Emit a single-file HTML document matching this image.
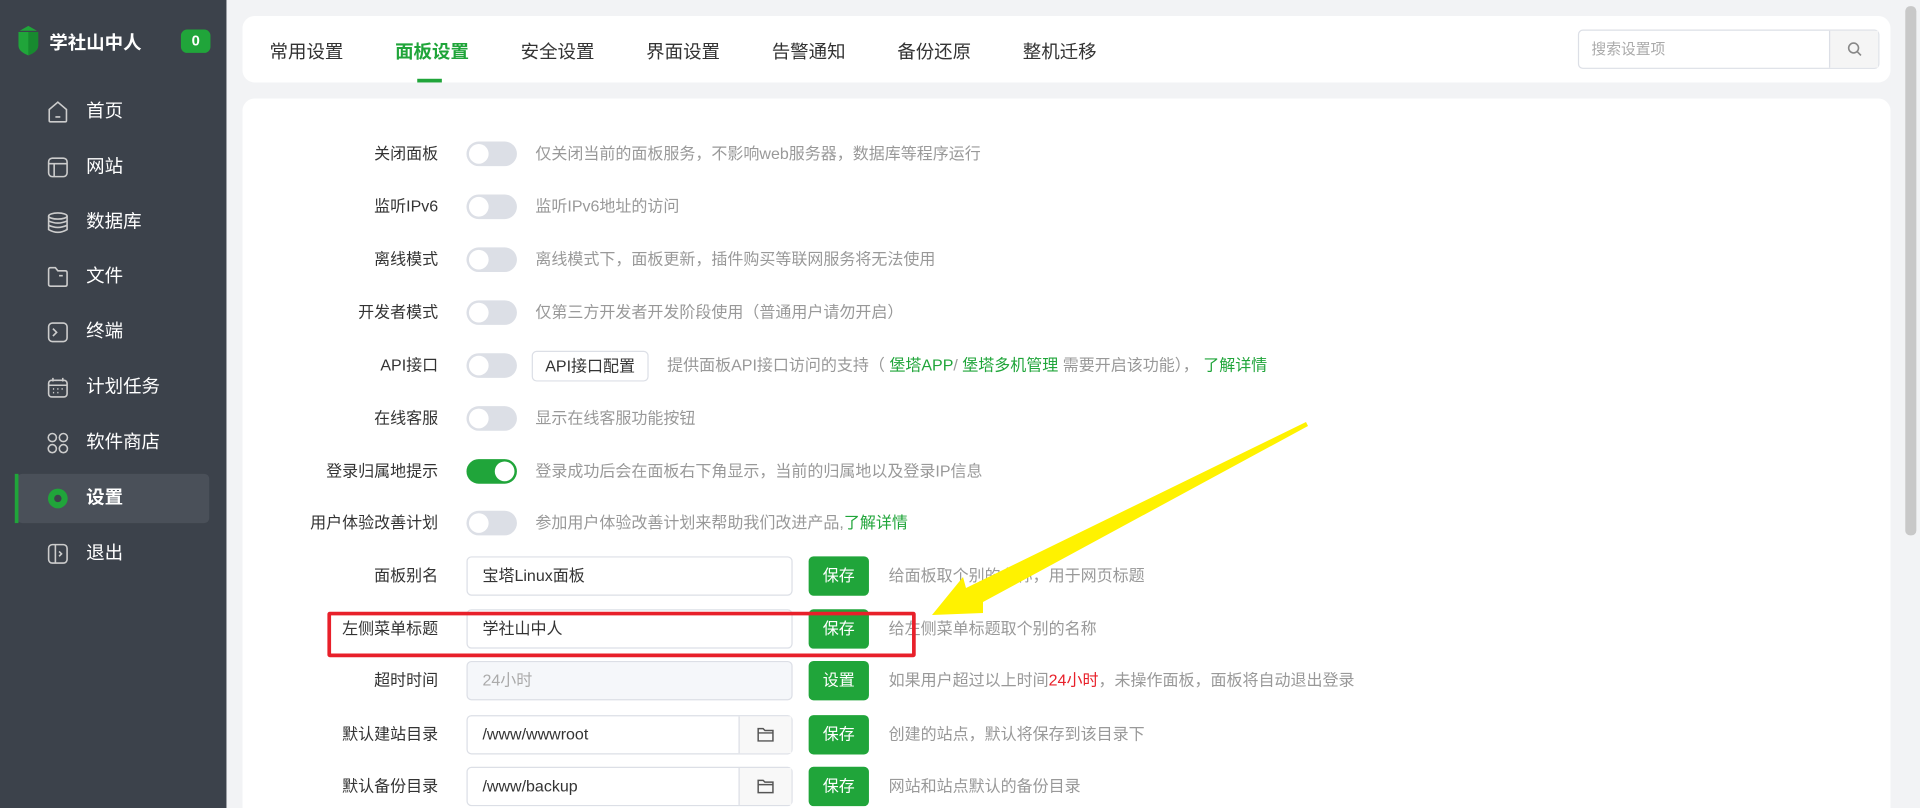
<!DOCTYPE html>
<html><head><meta charset="utf-8"><style>
*{box-sizing:border-box;margin:0;padding:0}
html,body{width:1920px;height:808px;overflow:hidden;background:#f2f3f5;font-family:"Liberation Sans","Noto Sans CJK SC",sans-serif}
#clip{position:absolute;left:0;top:0;width:1920px;height:808px;overflow:hidden}
#w{position:absolute;left:0;top:0;width:1560px;height:657px;overflow:hidden;transform:scale(1.2308,1.2308);transform-origin:0 0}
.sb{position:absolute;left:0;top:0;width:184px;height:660px;background:#3c424b}
.logo{position:absolute;left:40px;top:24px;color:#fff;font-weight:bold;font-size:15px}
.badge{position:absolute;left:147px;top:24px;width:24px;height:19px;border-radius:5px;background:#20a53a;color:#fff;font-weight:bold;font-size:12px;text-align:center;line-height:19px}
.mi{position:absolute;left:14px;width:156px;height:40px;color:#fff;font-size:15px;line-height:40px;padding-left:56px}
.mi svg{position:absolute;left:24px;top:11px}
.act{background:#4a5059;border-radius:4px}
.act:before{content:"";position:absolute;left:-2px;top:0;width:3px;height:40px;background:#20a53a}
.card{position:absolute;left:197px;background:#fff;border-radius:10px;width:1339px}
.tab{position:absolute;top:31px;font-size:15px;color:#333}
.row{position:absolute;left:197px;width:1339px;height:40px;font-size:13px}
.lb{position:absolute;right:1180px;top:0;line-height:40px;color:#333;white-space:nowrap}
.tg{position:absolute;left:182px;top:10px;width:41px;height:20px;border-radius:10px;background:#dcdfe6}
.tg:after{content:"";position:absolute;left:2px;top:2px;width:16px;height:16px;border-radius:50%;background:#fff}
.tg.on{background:#20a53a}.tg.on:after{left:23px}
.ds{position:absolute;left:238px;line-height:40px;color:#999;white-space:nowrap}
.ds2{position:absolute;left:525px;line-height:40px;color:#999;white-space:nowrap}
.g{color:#20a53a}
.in{position:absolute;left:182px;top:4px;width:265px;height:32px;border:1px solid #dcdfe6;border-radius:4px;line-height:30px;padding-left:12px;color:#333;background:#fff}
.bt{position:absolute;left:460px;top:4px;width:49px;height:32px;background:#20a53a;border-radius:4px;color:#fff;text-align:center;line-height:32px}
.fd{position:absolute;right:0;top:0;width:43px;height:30px;border-left:1px solid #dcdfe6;background:#f8f8f8}
</style></head><body><div id="clip"><div id="w">
<div class="sb">
<svg style="position:absolute;left:13px;top:20px" width="20" height="26" viewBox="0 0 20 26"><path d="M10 1 L3 5 L17 5Z M2 6 H18 V17 Q18 22 10 25 Q2 22 2 17Z" fill="#20a53a"/><path d="M10 6 V25 Q18 22 18 17 V6Z" fill="#178a2f"/></svg>
<div class="logo">学社山中人</div><div class="badge">0</div>
<div class="mi" style="top:71px"><svg width="18" height="18" fill="none" stroke="#ccc" stroke-width="1.3"><path d="M2 7 L9 1 L16 7 V16 Q16 17 15 17 H3 Q2 17 2 16Z M7 13 H11"/></svg>首页</div>
<div class="mi" style="top:116px"><svg width="18" height="18" fill="none" stroke="#ccc" stroke-width="1.3"><rect x="1.5" y="1.5" width="15" height="15" rx="3"/><path d="M1.5 6 H16.5 M6 6 V16.5"/></svg>网站</div>
<div class="mi" style="top:161px"><svg width="18" height="18" fill="none" stroke="#ccc" stroke-width="1.3"><ellipse cx="9" cy="3.5" rx="7.5" ry="2.5"/><path d="M1.5 3.5 V14.5 Q9 19 16.5 14.5 V3.5 M1.5 7.5 Q9 11 16.5 7.5 M1.5 11 Q9 14.5 16.5 11"/></svg>数据库</div>
<div class="mi" style="top:205px"><svg width="18" height="18" fill="none" stroke="#ccc" stroke-width="1.3"><path d="M1.5 3 Q1.5 1.5 3 1.5 H7 L9 4 H15 Q16.5 4 16.5 5.5 V15 Q16.5 16.5 15 16.5 H3 Q1.5 16.5 1.5 15Z M10 8 H13"/></svg>文件</div>
<div class="mi" style="top:250px"><svg width="18" height="18" fill="none" stroke="#ccc" stroke-width="1.3"><rect x="1.5" y="1.5" width="15" height="15" rx="3"/><path d="M5 6 L8 9 L5 12"/></svg>终端</div>
<div class="mi" style="top:295px"><svg width="18" height="18" fill="none" stroke="#ccc" stroke-width="1.3"><rect x="1.5" y="3" width="15" height="13.5" rx="2.5"/><path d="M1.5 7 H16.5 M5 1 V4 M13 1 V4 M5 10 H6 M8.5 10 H9.5 M12 10 H13 M5 13 H6 M8.5 13 H9.5"/></svg>计划任务</div>
<div class="mi" style="top:340px"><svg width="18" height="18" fill="none" stroke="#ccc" stroke-width="1.3"><circle cx="4.5" cy="4.5" r="3.3"/><circle cx="13.5" cy="4.5" r="3.3"/><circle cx="4.5" cy="13.5" r="3.3"/><circle cx="13.5" cy="13.5" r="3.3"/></svg>软件商店</div>
<div class="mi act" style="top:385px"><svg width="18" height="18"><circle cx="9" cy="9" r="8" fill="#20a53a"/><circle cx="9" cy="9" r="3" fill="#3c424b"/></svg><b>设置</b></div>
<div class="mi" style="top:430px"><svg width="18" height="18" fill="none" stroke="#ccc" stroke-width="1.3"><rect x="1.5" y="1.5" width="15" height="15" rx="3"/><path d="M7 1.5 V16.5 M10 7 L12 9 L10 11"/></svg>退出</div>
</div>
<div class="card" style="top:13px;height:54px">
<div class="tab" style="left:22px;top:18px">常用设置</div>
<div class="tab" style="left:124px;top:18px;color:#20a53a;font-weight:bold">面板设置</div>
<div style="position:absolute;left:142px;top:51px;width:20px;height:3px;background:#20a53a"></div>
<div class="tab" style="left:226px;top:18px">安全设置</div>
<div class="tab" style="left:328px;top:18px">界面设置</div>
<div class="tab" style="left:430px;top:18px">告警通知</div>
<div class="tab" style="left:532px;top:18px">备份还原</div>
<div class="tab" style="left:634px;top:18px">整机迁移</div>
<div style="position:absolute;left:1085px;top:11px;width:245px;height:32px;border:1px solid #dcdfe6;border-radius:4px;font-size:12px;color:#aaa;line-height:30px;padding-left:10px">搜索设置项
<div style="position:absolute;right:0;top:0;width:40px;height:30px;border-left:1px solid #dcdfe6;background:#f5f5f5"><svg style="position:absolute;left:14px;top:9px" width="12" height="12" fill="none" stroke="#888" stroke-width="1.3"><circle cx="5" cy="5" r="4"/><path d="M8 8 L11 11"/></svg></div></div>
</div>
<div class="card" style="top:80px;height:590px"></div>
<div style="position:absolute;left:1548px;top:5px;width:9px;height:430px;background:#c8c8c8;border-radius:4px"></div>

<div class="row" style="top:105px"><div class="lb">关闭面板</div><div class="tg"></div><div class="ds">仅关闭当前的面板服务，不影响web服务器，数据库等程序运行</div></div>
<div class="row" style="top:148px"><div class="lb">监听IPv6</div><div class="tg"></div><div class="ds">监听IPv6地址的访问</div></div>
<div class="row" style="top:191px"><div class="lb">离线模式</div><div class="tg"></div><div class="ds">离线模式下，面板更新，插件购买等联网服务将无法使用</div></div>
<div class="row" style="top:234px"><div class="lb">开发者模式</div><div class="tg"></div><div class="ds">仅第三方开发者开发阶段使用（普通用户请勿开启）</div></div>
<div class="row" style="top:277px"><div class="lb">API接口</div><div class="tg"></div><div style="position:absolute;left:235px;top:8px;width:95px;height:25px;border:1px solid #dcdfe6;border-radius:4px;text-align:center;line-height:23px;color:#333">API接口配置</div><div class="ds" style="left:345px">提供面板API接口访问的支持（ <span class="g">堡塔APP</span>/ <span class="g">堡塔多机管理</span> 需要开启该功能）， <span class="g">了解详情</span></div></div>
<div class="row" style="top:320px"><div class="lb">在线客服</div><div class="tg"></div><div class="ds">显示在线客服功能按钮</div></div>
<div class="row" style="top:363px"><div class="lb">登录归属地提示</div><div class="tg on"></div><div class="ds">登录成功后会在面板右下角显示，当前的归属地以及登录IP信息</div></div>
<div class="row" style="top:405px"><div class="lb">用户体验改善计划</div><div class="tg"></div><div class="ds">参加用户体验改善计划来帮助我们改进产品,<span class="g">了解详情</span></div></div>
<div class="row" style="top:448px"><div class="lb">面板别名</div><div class="in">宝塔Linux面板</div><div class="bt">保存</div><div class="ds2">给面板取个别的名称，用于网页标题</div></div>
<div class="row" style="top:491px"><div class="lb">左侧菜单标题</div><div class="in">学社山中人</div><div class="bt">保存</div><div class="ds2">给左侧菜单标题取个别的名称</div></div>
<div class="row" style="top:533px"><div class="lb">超时时间</div><div class="in" style="background:#f5f7fa;color:#aaa">24小时</div><div class="bt">设置</div><div class="ds2">如果用户超过以上时间<span style="color:#e8202a">24小时</span>，未操作面板，面板将自动退出登录</div></div>
<div class="row" style="top:577px"><div class="lb">默认建站目录</div><div class="in">/www/wwwroot<div class="fd"><svg style="position:absolute;left:14px;top:8px" width="15" height="13" fill="none" stroke="#555" stroke-width="1.2"><path d="M1 2 H5 L6.5 3.5 H13 V12 H1Z M1 5.5 H13"/></svg></div></div><div class="bt">保存</div><div class="ds2">创建的站点，默认将保存到该目录下</div></div>
<div class="row" style="top:619px"><div class="lb">默认备份目录</div><div class="in">/www/backup<div class="fd"><svg style="position:absolute;left:14px;top:8px" width="15" height="13" fill="none" stroke="#555" stroke-width="1.2"><path d="M1 2 H5 L6.5 3.5 H13 V12 H1Z M1 5.5 H13"/></svg></div></div><div class="bt">保存</div><div class="ds2">网站和站点默认的备份目录</div></div>
<div style="position:absolute;left:266px;top:497px;width:478px;height:37px;border:3px solid #e8202a;border-radius:2px"></div>
</div>
<svg style="position:absolute;left:0;top:0" width="1920" height="808"><polygon points="932,615 963,577 966,588 1306,422 1308,426 983,602 983,613" fill="#fff200"/></svg>
</div></body></html>
